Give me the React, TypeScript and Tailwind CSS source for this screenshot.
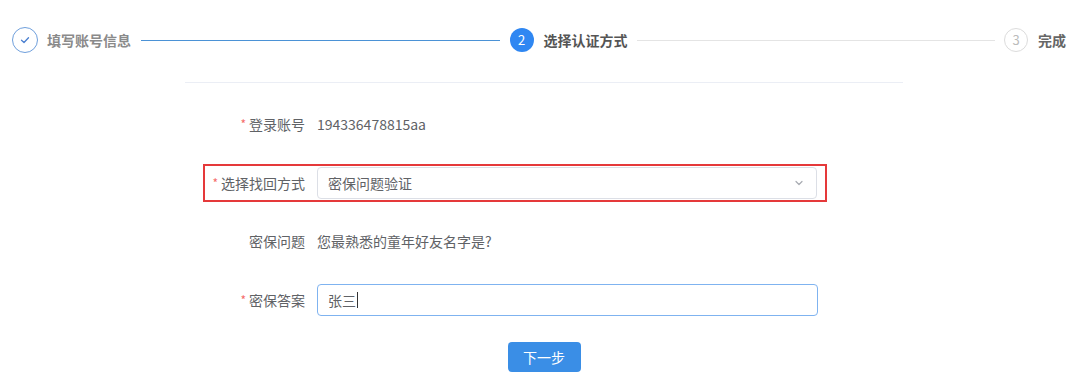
import React from 'react';

const font = { fontFamily: '"Noto Sans CJK SC", "Liberation Sans", sans-serif' };

const Req = () => <span className="mr-[3px] text-[12px] text-[#f56c6c]">*</span>;

export default function App() {
    return (
        <div className="h-[385px] w-[1080px] overflow-hidden bg-white pt-[27px]" style={font}>
            {/* Steps */}
            <div className="flex h-[26px] items-center pl-[12px] pr-[14px]">
                <div className="flex h-[26px] w-[26px] items-center justify-center rounded-full border border-[#6f9fdc]">
                    <svg width="12" height="12" viewBox="0 0 12 12" fill="none">
                        <path d="M2.5 6.2 L5 8.5 L9.5 3.8" stroke="#4a7fd0" strokeWidth="1.3" strokeLinecap="round" strokeLinejoin="round" />
                    </svg>
                </div>
                <span className="ml-[9px] text-[14px] font-bold text-[#8a8a8a]">填写账号信息</span>
                <div className="mx-[10px] h-px flex-1 bg-[#4b92d6]" />
                <div className="flex h-[24px] w-[24px] items-center justify-center rounded-full bg-[#2f87f2] text-[13px] text-white">2</div>
                <span className="ml-[10px] text-[14px] font-bold text-[#555]">选择认证方式</span>
                <div className="mx-[9px] h-px flex-1 bg-[#e4e4e4]" />
                <div className="flex h-[24px] w-[24px] items-center justify-center rounded-full border border-[#dcdcdc] text-[13px] text-[#bbb]">3</div>
                <span className="ml-[10px] text-[14px] font-bold text-[#666]">完成</span>
            </div>

            {/* Form */}
            <div className="ml-[185px] mt-[29px] w-[718px] border-t border-[#ebeef5]">
                <div className="mt-[25px] flex h-[32px] items-center">
                    <div className="flex w-[120px] items-center justify-end text-[14px] text-[#606266]">
                        <Req />登录账号
                    </div>
                    <span className="ml-[12px] text-[14px] text-[#606266]">194336478815aa</span>
                </div>

                <div className="relative mt-[27px] flex h-[32px] items-center">
                    <div className="pointer-events-none absolute left-[18px] top-[-3px] h-[38px] w-[624px] border-2 border-[#e5393a]" />
                    <div className="flex w-[120px] items-center justify-end text-[14px] text-[#606266]">
                        <Req />选择找回方式
                    </div>
                    <div className="ml-[12px] flex h-[32px] w-[500px] items-center justify-between rounded-[4px] border border-[#dcdfe6] px-[10px] text-[14px] text-[#606266]">
                        <span>密保问题验证</span>
                        <svg width="12" height="12" viewBox="0 0 12 12" fill="none" className="mr-[1px]">
                            <path d="M3 4.5 L6 7.5 L9 4.5" stroke="#a8abb2" strokeWidth="1.2" strokeLinecap="round" strokeLinejoin="round" />
                        </svg>
                    </div>
                </div>

                <div className="mt-[26px] flex h-[32px] items-center">
                    <div className="flex w-[120px] items-center justify-end text-[14px] text-[#606266]">密保问题</div>
                    <span className="ml-[12px] text-[14px] text-[#606266]">您最熟悉的童年好友名字是?</span>
                </div>

                <div className="mt-[27px] flex h-[32px] items-center">
                    <div className="flex w-[120px] items-center justify-end text-[14px] text-[#606266]">
                        <Req />密保答案
                    </div>
                    <div className="ml-[12px] flex h-[32px] w-[501px] items-center rounded-[4px] border border-[#7fb3f0] px-[10px] text-[14px] text-[#606266]">
                        <span>张三</span>
                        <span className="ml-px h-[16px] w-px bg-[#333]" />
                    </div>
                </div>

                <div className="mt-[26px] flex justify-center">
                    <button className="h-[30px] w-[73px] rounded-[4px] bg-[#3a8ee6] text-[14px] text-white">下一步</button>
                </div>
            </div>
        </div>
    );
}
